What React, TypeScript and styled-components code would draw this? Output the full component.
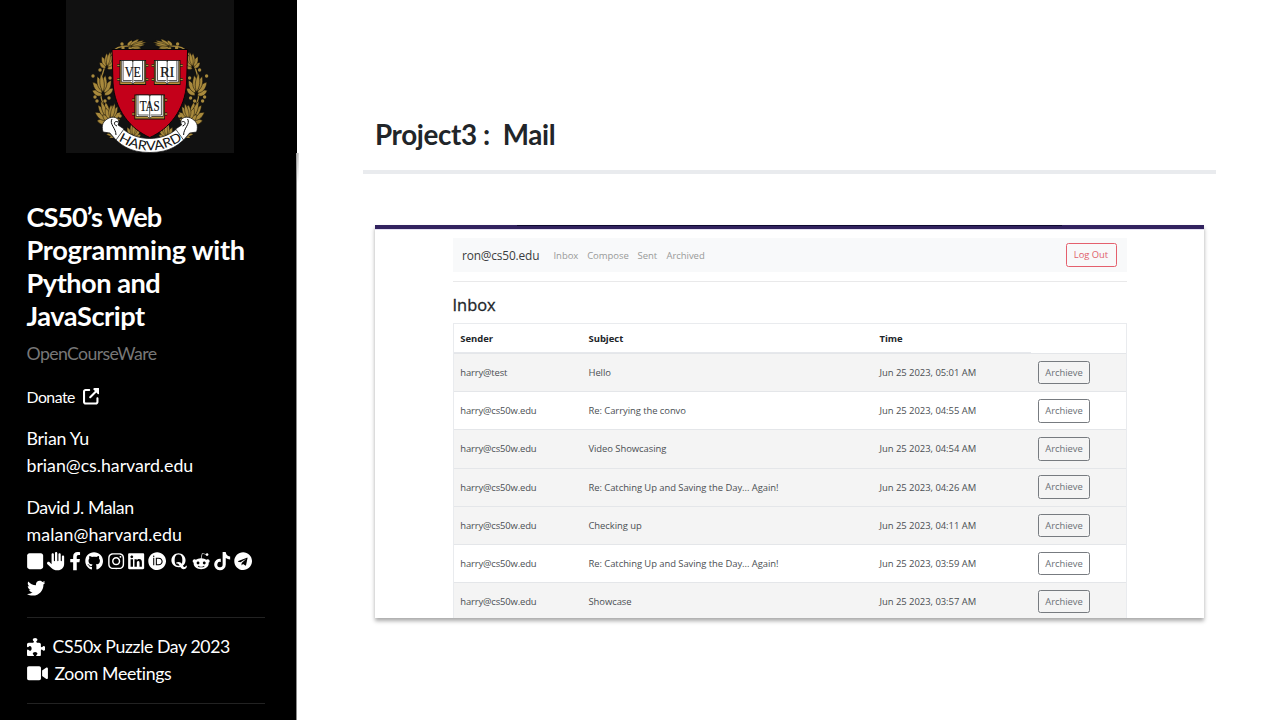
import React from 'react';
import styled, { createGlobalStyle } from 'styled-components';
import {
  FaFacebookF, FaGithub, FaInstagram, FaLinkedin, FaOrcid, FaQuora,
  FaRedditAlien, FaTiktok, FaTelegram, FaTwitter, FaVideo,
} from 'react-icons/fa';
import { FaHand, FaSquare, FaPuzzlePiece, FaUpRightFromSquare } from 'react-icons/fa6';

const Global = createGlobalStyle`
  * { box-sizing: border-box; }
  html, body { margin: 0; height: 100%; overflow: hidden; background: #fff; }
  body { font-family: Lato, "Open Sans", sans-serif; font-variant-ligatures: none; }
`;

const Page = styled.div`
  display: flex;
  width: 1280px;
  height: 720px;
  overflow: hidden;
`;

/* Sidebar */
const Sidebar = styled.aside`
  flex: none;
  width: 297px;
  height: 720px;
  background: #000;
  color: #fff;
  display: flex;
  flex-direction: column;
`;
const CrestFrame = styled.div`
  width: 168px;
  height: 153px;
  margin-left: 66px;
  background: #111;
  flex: none;
  svg { display: block; }
`;
const SideBody = styled.div`
  position: relative;
  flex: 1;
  padding: 46.6px 31px 0 26.5px;
  border-right: 1px solid #8a8a8a;
  white-space: nowrap;
  &::after {
    content: '';
    position: absolute;
    top: 0;
    right: -3px;
    width: 3px;
    height: 30px;
    background: linear-gradient(90deg, #999, #ddd);
    -webkit-mask-image: linear-gradient(#000, transparent);
  }
`;
const CourseTitle = styled.h1`
  margin: 0;
  font-size: 27.2px;
  line-height: 33.3px;
  font-weight: 700;
`;
const Line = styled.span<{ $ls?: number }>`
  display: block;
  letter-spacing: ${p => p.$ls ?? 0}px;
`;
const Subtitle = styled.div`
  height: 27px;
  margin-top: 7.4px;
  font-size: 17.7px;
  line-height: 27px;
  color: #777;
`;
const Donate = styled.div`
  display: flex;
  align-items: center;
  gap: 8px;
  height: 27px;
  margin-top: 16px;
  font-size: 15.8px;
  svg { width: 16.5px; height: 16.5px; }
`;
const Person = styled.div<{ $gap: number }>`
  margin-top: ${p => p.$gap}px;
  font-size: 17.8px;
  line-height: 27px;
`;
const Socials = styled.div`
  display: flex;
  flex-wrap: wrap;
  align-items: center;
  column-gap: 4.2px;
  font-size: 18px;
  line-height: 0;
`;
const Social = styled.span<{ $w: number }>`
  display: flex;
  align-items: center;
  justify-content: center;
  width: ${p => p.$w}px;
  height: 26.5px;
  svg { width: 18.3px; height: 18.3px; flex: none; }
`;
const Rule = styled.hr<{ $top: number }>`
  height: 1px;
  border: 0;
  margin: ${p => p.$top}px 0 0;
  background: #222;
`;
const Link = styled.div<{ $gap: number; $icon: number }>`
  display: flex;
  align-items: center;
  gap: ${p => p.$gap}px;
  height: 26.6px;
  font-size: 17.7px;
  line-height: 26px;
  svg { width: ${p => p.$icon}px; height: 18.5px; }
`;
const Links = styled.div`
  padding-top: 16px;
`;

/* Main column */
const Main = styled.main`
  flex: 1;
  padding: 113px 64px 0 66px;
`;
const Heading = styled.h2`
  margin: 0;
  height: 61px;
  padding-left: 12px;
  border-bottom: 4px solid #e9ebee;
  font-size: 27.8px;
  line-height: 44px;
  font-weight: 700;
  color: #212529;
  white-space: pre;
`;
const Shot = styled.section`
  width: 829px;
  height: 393px;
  margin: 51px 0 0 12px;
  background: #fff;
  box-shadow: 0 3px 4px rgba(0, 0, 0, 0.34);
  overflow: hidden;
`;
const TopBar = styled.div`
  height: 5px;
  background:
    linear-gradient(90deg, transparent 142px, #0e0930 142px, #0e0930 687px, transparent 687px) 0 0 / 100% 1px no-repeat,
    linear-gradient(#32235f 0 4px, #e4e0f2 4px);
`;
const Mail = styled.div`
  width: 674px;
  margin: 8px 0 0 77.5px;
  font-family: "Open Sans", "Noto Sans", sans-serif;
`;
const Nav = styled.nav`
  display: flex;
  align-items: center;
  height: 34px;
  padding: 0 10px 0 9.5px;
  background: #f8f9fa;
`;
const Brand = styled.span`
  width: 91.5px;
  font-size: 11.9px;
  letter-spacing: -0.17px;
  color: #3b3d40;
`;
const NavItem = styled.span<{ $w: number }>`
  width: ${p => p.$w}px;
  font-size: 9.5px;
  letter-spacing: -0.05px;
  color: #999;
`;
const Button = styled.button<{ $tone: 'red' | 'gray'; $w: number }>`
  width: ${p => p.$w}px;
  height: 23.5px;
  margin-left: ${p => (p.$tone === 'red' ? 'auto' : '0')};
  padding: 0;
  border: 1px solid ${p => (p.$tone === 'red' ? '#e4606d' : '#777b80')};
  border-radius: 2.5px;
  background: transparent;
  color: ${p => (p.$tone === 'red' ? '#e0606b' : '#6c7076')};
  font: 400 9.4px/1 "Open Sans", sans-serif;
`;
const MailRule = styled.hr`
  height: 1px;
  border: 0;
  margin: 9px 0 0;
  background: #e9e9ea;
`;
const BoxTitle = styled.h3`
  margin: 10px 0 6px;
  font-size: 16.4px;
  line-height: 25px;
  font-weight: 500;
  -webkit-text-stroke: 0.3px #212529;
  color: #212529;
`;
const Table = styled.div`
  border: 1px solid #e9ebee;
`;
const Row = styled.div<{ $read?: boolean }>`
  display: grid;
  grid-template-columns: 128.2px 291px 158.3px 1fr;
  align-items: center;
  height: 38.2px;
  padding-left: 6.8px;
  border-bottom: 1px solid #e4e6e9;
  background: ${p => (p.$read ? '#f4f4f4' : '#fff')};
  font-size: 9.45px;
  color: #4b4f53;
  white-space: nowrap;
`;
const Cell = styled.span<{ $ls: number }>`
  letter-spacing: ${p => p.$ls}px;
`;
const HeadRow = styled(Row)`
  height: 30px;
  font-weight: 700;
  color: #212529;
  background: linear-gradient(#e6e8ec, #e6e8ec) 0 100% / 577px 1px no-repeat;
`;

/* Harvard crest */
const GOLD = '#a8893c';
const Leaf = ({ x, y, a, l = 12, w = 3.3 }: { x: number; y: number; a: number; l?: number; w?: number }) => (
  <path
    transform={`translate(${x} ${y}) rotate(${a})`}
    d={`M0 0C${-w} ${-l * 0.3} ${-w} ${-l * 0.6} 0 ${-l}C${w} ${-l * 0.6} ${w} ${-l * 0.3} 0 0Z`}
    fill={GOLD}
    stroke="#0c0a06"
    strokeWidth=".45"
  />
);
const Spray = ({ x, y, a, s = 1 }: { x: number; y: number; a: number; s?: number }) => (
  <g transform={`translate(${x} ${y}) rotate(${a}) scale(${s})`}>
    <Leaf x={-1} y={3} a={-58} l={10} />
    <Leaf x={1} y={3} a={58} l={10} />
    <Leaf x={-1} y={1} a={-34} l={13} />
    <Leaf x={1} y={1} a={34} l={13} />
    <Leaf x={0} y={0} a={-14} l={15} />
    <Leaf x={0} y={0} a={14} l={15} />
    <Leaf x={0} y={0} a={0} l={17} w={2.6} />
  </g>
);
const berries = [[34, 70], [29, 97], [27, 76], [56, 44], [43, 98], [54, 116], [57, 48], [44, 78], [31, 101], [39, 101]];
const Branch = () => (
  <g>
    <path d="M60 132C44 122 32 104 35 84C36 70 40 60 48 50C54 45 62 46 72 46" fill="none" stroke={GOLD} strokeWidth="1.3" />
    <Spray x={41} y={66} a={12} s={0.85} />
    <Spray x={37} y={92} a={-6} s={1.12} />
    <Spray x={42} y={119} a={-22} s={1.15} />
    <Spray x={45} y={119} a={14} s={0.95} />
    <g transform="translate(65 46) rotate(76) scale(.58 .95)"><Spray x={0} y={0} a={0} /></g>
    <Spray x={67} y={136} a={6} s={0.82} />
    <Spray x={48} y={134} a={-52} s={0.6} />
    {berries.map(([cx, cy], i) => <circle key={i} cx={cx} cy={cy} r="1.7" fill={GOLD} />)}
  </g>
);
const Book = ({ x, y, text, w = 23, tw = 16 }: { x: number; y: number; text: string; w?: number; tw?: number }) => (
  <g transform={`translate(${x} ${y})`}>
    <path d={`M-4 5H${w + 4}M-4 19H${w + 4}`} stroke="#17110a" strokeWidth="3" />
    <path d={`M-4 5H${w + 4}M-4 19H${w + 4}`} stroke="#b8933c" strokeWidth="1.7" />
    <rect x="-1.8" y="-.5" width={w + 3.6} height="25" fill="#17110a" />
    <rect x="-1" y=".5" width={w + 2} height="23" fill="#b8933c" />
    <path d={`M0 0H${w / 2 - 1}L${w / 2} 1.2L${w / 2 + 1} 0H${w}V21.5H${w / 2 + 2}L${w / 2} 23.5L${w / 2 - 2} 21.5H0Z`} fill="#fff" stroke="#111" strokeWidth=".7" />
    <path d={`M${w / 2} 1V23M1.8 0V20H${w / 2 - 1}M${w - 1.8} 0V20H${w / 2 + 1}`} fill="none" stroke="#111" strokeWidth=".7" />
    <text x={w / 2} y="16" textAnchor="middle" textLength={tw} lengthAdjust="spacingAndGlyphs" fontFamily="Liberation Serif, serif" fontSize="14.5" fill="#111" stroke="#111" strokeWidth=".2">{text}</text>
  </g>
);
const Curl = () => (
  <g stroke="#0c0c0c">
    <path d="M37 132C35 125 37 121 43 118C49 115.500 55 119 52 125L58 129L50 140L44 133Z" fill="#fff" strokeWidth=".7" />
    <path d="M46 119C43 124 50 128 50 135M51 126C47 125 48 120 52 122" fill="none" strokeWidth="1" />
  </g>
);
const Crest = () => (
  <svg width="168" height="153" viewBox="0 0 168 153">
    <Branch />
    <g transform="translate(167.6 0) scale(-1 1)"><Branch /></g>
    <path d="M46 49.500H121.600L120.600 83C119 110 103 129 83.800 137.500C64.600 129 48.600 110 47 83Z" fill="#c4001a" stroke="#0a0505" strokeWidth="1" />
    <Book x={55.3} y={60.5} text="VE" />
    <Book x={89.7} y={60.5} text="RI" tw={14.500} />
    <Book x={70.2} y={95} text="TAS" w={27} tw={20} />
    <path d="M56 128C70 142 97.600 142 111.600 128L124 133C114 145 104 152.500 83.800 152.500C63.600 152.500 53.600 145 43.600 133Z" fill="#fff" stroke="#080808" strokeWidth=".7" />
    <Curl />
    <g transform="translate(167.6 0) scale(-1 1)"><Curl /></g>
    <path id="motto" d="M49 138.500Q83.800 162 118.600 138.500" fill="none" />
    <text fontFamily="Lato, sans-serif" fontSize="13" fill="#111">
      <textPath href="#motto" startOffset="4" textLength="68" lengthAdjust="spacingAndGlyphs">HARVARD</textPath>
    </text>
  </svg>
);

const socials: [React.ComponentType, number][] = [
  [FaSquare, 16.5], [FaHand, 18], [FaFacebookF, 12], [FaGithub, 18], [FaInstagram, 16], [FaLinkedin, 16],
  [FaOrcid, 18.2], [FaQuora, 17], [FaRedditAlien, 18], [FaTiktok, 15.6], [FaTelegram, 18], [FaTwitter, 18.5],
];
const mails: [string, string, string, boolean][] = [
  ['harry@test', 'Hello', '05:01', true],
  ['harry@cs50w.edu', 'Re: Carrying the convo', '04:55', false],
  ['harry@cs50w.edu', 'Video Showcasing', '04:54', true],
  ['harry@cs50w.edu', 'Re: Catching Up and Saving the Day... Again!', '04:26', true],
  ['harry@cs50w.edu', 'Checking up', '04:11', true],
  ['harry@cs50w.edu', 'Re: Catching Up and Saving the Day... Again!', '03:59', false],
  ['harry@cs50w.edu', 'Showcase', '03:57', true],
];

export default function App() {
  return (
    <Page>
      <Global />
      <Sidebar>
        <CrestFrame><Crest /></CrestFrame>
        <SideBody>
          <CourseTitle>
            <Line $ls={-1.05}>CS50’s Web</Line>
            <Line $ls={-0.25}>Programming with</Line>
            <Line $ls={-0.5}>Python and</Line>
            <Line $ls={-0.45}>JavaScript</Line>
          </CourseTitle>
          <Subtitle><Line $ls={-0.6}>OpenCourseWare</Line></Subtitle>
          <Donate><Line $ls={-0.5}>Donate</Line><FaUpRightFromSquare /></Donate>
          <Person $gap={15}>
            <Line $ls={-0.22}>Brian Yu</Line>
            <Line $ls={-0.03}>brian@cs.harvard.edu</Line>
          </Person>
          <Person $gap={15}>
            <Line $ls={-0.45}>David J. Malan</Line>
            <Line $ls={0.1}>malan@harvard.edu</Line>
          </Person>
          <Socials>
            {socials.map(([Icon, w], i) => <Social key={i} $w={w}><Icon /></Social>)}
          </Socials>
          <Rule $top={15.5} />
          <Links>
            <Link $gap={7.5} $icon={18.5}><FaPuzzlePiece /><Line $ls={-0.4}>CS50x Puzzle Day 2023</Line></Link>
            <Link $gap={7} $icon={21}><FaVideo /><Line $ls={-0.35}>Zoom Meetings</Line></Link>
          </Links>
          <Rule $top={16} />
        </SideBody>
      </Sidebar>
      <Main>
        <Heading><Line $ls={-0.37}>Project3 :  Mail</Line></Heading>
        <Shot>
          <TopBar />
          <Mail>
            <Nav>
              <Brand>ron@cs50.edu</Brand>
              <NavItem $w={33.7}>Inbox</NavItem>
              <NavItem $w={50.3}>Compose</NavItem>
              <NavItem $w={29}>Sent</NavItem>
              <NavItem $w={50}>Archived</NavItem>
              <Button $tone="red" $w={51}>Log Out</Button>
            </Nav>
            <MailRule />
            <BoxTitle>Inbox</BoxTitle>
            <Table>
              <HeadRow><span>Sender</span><span>Subject</span><span>Time</span></HeadRow>
              {mails.map(([from, subject, time, read], i) => (
                <Row key={i} $read={read}>
                  <Cell $ls={-0.15}>{from}</Cell>
                  <Cell $ls={-0.06}>{subject}</Cell>
                  <Cell $ls={-0.03}>Jun 25 2023, {time} AM</Cell>
                  <Button $tone="gray" $w={52.5}>Archieve</Button>
                </Row>
              ))}
            </Table>
          </Mail>
        </Shot>
      </Main>
    </Page>
  );
}
